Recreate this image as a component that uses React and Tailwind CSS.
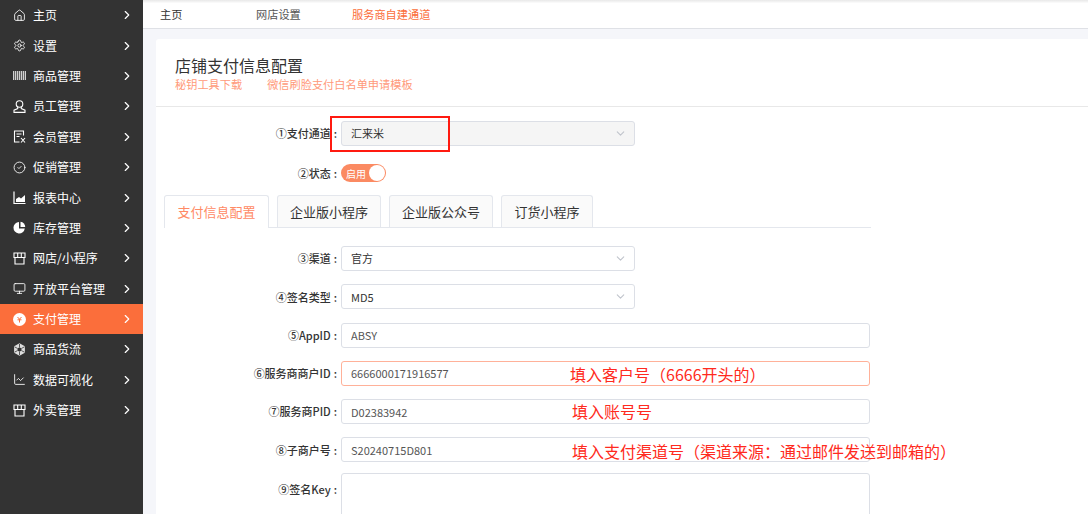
import React from "react";
import {
  House,
  Settings,
  CircleCheck,
  Monitor,
  ChartLine,
  ChevronRight,
  ChevronDown,
} from "lucide-react";

// 菜单图标,lucide 里没有一样的就自己画
function Svg({ children }) {
  return (
    <svg width="13" height="13" viewBox="0 0 13 13" fill="none" stroke="currentColor" strokeWidth="1.1">
      {children}
    </svg>
  );
}

const BarrasIcon = () => (
  <Svg>
    <path d="M0 2h13v9H0z" fill="#cfcfcf" stroke="none" />
    <path d="M1.500 2v9M3.500 2v9M5.500 2v9M7.500 2v9M9.500 2v9M11.500 2v9" stroke="#333" strokeWidth="0.7" />
  </Svg>
);

const UserIcon = () => (
  <Svg>
    <circle cx="6.5" cy="4" r="3.3" />
    <path d="M4.700 7v1.600L1 10.200v2.200h11v-2.200L8.300 8.600V7" />
  </Svg>
);

const MembroIcon = () => (
  <Svg>
    <path d="M10.500 5.500V1h-9v11h5M3.500 4h5M3.500 6.500h3" />
    <path d="M8 8l4 4.500M12 8l-4 4.500" />
  </Svg>
);

const AreaIcon = () => (
  <Svg>
    <path d="M1 0.500v12h11.500" strokeWidth="1.2" />
    <path d="M3 11V8l3-2 2 1.500 4-3.500v7z" fill="currentColor" stroke="none" />
  </Svg>
);

const PizzaIcon = () => (
  <Svg>
    <path d="M6 1a5.700 5.700 0 1 0 5.800 6.500H6z" fill="currentColor" stroke="none" />
    <path d="M7.500 0.800a5 5 0 0 1 4.700 5.200H7.500z" fill="currentColor" stroke="none" />
  </Svg>
);

const LojaIcon = () => (
  <Svg>
    <path d="M1 1h11v4.500H1zM4.700 1v4.500M8.300 1v4.500M2 5.500V12h9V5.500" />
  </Svg>
);

const PayIcon = () => (
  <svg width="13" height="13" viewBox="0 0 13 13">
    <circle cx="6.5" cy="6.5" r="6.5" fill="#fff" />
    <path d="M4.500 4l2 2.200 2-2.200M4.500 6.800h4M6.500 6.200v3.300" stroke="#fb6e3b" strokeWidth="1" fill="none" />
  </svg>
);

const FluxoIcon = () => (
  <svg width="13" height="13" viewBox="0 0 13 13">
    <path d="M6.500 0.300l5.400 3v6.400l-5.400 3-5.400-3V3.300z" fill="#ddd" />
    <circle cx="6.5" cy="6.5" r="2" fill="#333" />
    <path d="M6.500 1v3.500M6.500 8.500v3.500M1.500 3.800l3.200 1.700M8.300 7.500l3.200 1.700M11.500 3.800L8.300 5.500M4.700 7.500l-3.200 1.700" stroke="#333" strokeWidth="0.8" />
  </svg>
);

const menus = [
  { nome: "主页", Icon: House },
  { nome: "设置", Icon: Settings },
  { nome: "商品管理", Icon: BarrasIcon },
  { nome: "员工管理", Icon: UserIcon },
  { nome: "会员管理", Icon: MembroIcon },
  { nome: "促销管理", Icon: CircleCheck },
  { nome: "报表中心", Icon: AreaIcon },
  { nome: "库存管理", Icon: PizzaIcon },
  { nome: "网店/小程序", Icon: LojaIcon },
  { nome: "开放平台管理", Icon: Monitor },
  { nome: "支付管理", Icon: PayIcon, ativo: true },
  { nome: "商品货流", Icon: FluxoIcon },
  { nome: "数据可视化", Icon: ChartLine },
  { nome: "外卖管理", Icon: LojaIcon },
];

const abas = ["企业版小程序", "企业版公众号", "订货小程序"];

function Rotulo({ texto, className = "" }) {
  return (
    <div className={`w-[185px] pr-[4px] text-right text-[11px] font-medium text-[#333] whitespace-nowrap ${className}`}>
      {texto}
      <span className="ml-[3px]">:</span>
    </div>
  );
}

function Linha({ label, children, className = "mb-[13.3px]" }) {
  return (
    <div className={`flex items-center ${className}`}>
      <Rotulo texto={label} />
      {children}
    </div>
  );
}

function Selecao({ valor, disabled }) {
  return (
    <div className={`flex h-[25px] w-[294px] items-center justify-between rounded-[3px] border border-[#dcdfe6] pl-[9px] pr-[7px] text-[11px] text-[#333] ${disabled ? "bg-[#f5f5f5]" : "bg-white"}`}>
      <span>{valor}</span>
      <ChevronDown size={13} className="text-[#c0c4cc]" />
    </div>
  );
}

function Campo({ valor, borda = "border-[#dcdfe6]" }) {
  return (
    <input
      readOnly
      value={valor}
      className={`h-[25px] w-[529px] rounded-[3px] border bg-white px-[9px] text-[11px] text-[#555] outline-none ${borda}`}
    />
  );
}

export default function App() {
  return (
    <div
      className="relative flex h-[514px] w-[1088px] overflow-hidden bg-[#f5f6fa]"
      style={{ fontFamily: '"Noto Sans CJK SC", "Noto Sans", sans-serif' }}
    >
      {/* 左侧菜单 */}
      <aside className="w-[143px] shrink-0 bg-[#333333] text-[12px] text-white">
        {menus.map(({ nome, Icon, ativo }) => (
          <div
            key={nome}
            className={`flex h-[30.4px] items-center pl-[13px] pr-[9px] ${ativo ? "bg-[#fb6e3b]" : ""}`}
          >
            <span className="flex w-[20px] shrink-0 items-center">
              <Icon size={13} strokeWidth={1.6} />
            </span>
            <span className="flex-1 whitespace-nowrap">{nome}</span>
            <ChevronRight size={14} strokeWidth={2} />
          </div>
        ))}
      </aside>

      <main className="flex min-w-0 flex-1 flex-col">
        {/* 顶部导航 */}
        <nav className="flex h-[29px] shrink-0 items-center border-b border-[#dfe1e6] bg-gradient-to-b from-[#e8e8e8] via-white via-[12%] to-white pl-[17px] text-[11.2px]">
          <span className="w-[96px] text-[#333]">主页</span>
          <span className="w-[96px] text-[#555]">网店设置</span>
          <span className="text-[#fb6e3b]">服务商自建通道</span>
        </nav>

        {/* 内容卡片 */}
        <section className="ml-[13px] mt-[10px] flex-1 rounded-tl-[3px] bg-white">
          <header className="h-[68px] border-b border-[#e8e8e8] pl-[19px] pt-[15px]">
            <h1 className="text-[16px] leading-[22px] text-[#333]">店铺支付信息配置</h1>
            <div className="flex gap-[25px] text-[11.2px] leading-[16px] text-[#ff9a7a]">
              <span>秘钥工具下载</span>
              <span>微信刷脸支付白名单申请模板</span>
            </div>
          </header>

          <div className="pt-[14px]">
            <Linha label="①支付通道" className="mb-[18px]">
              <Selecao valor="汇来米" disabled />
            </Linha>
            <Linha label="②状态" className="mb-[13px]">
              <div className="flex h-[18px] w-[45px] items-center justify-between rounded-full bg-[#fb8a62] pl-[5px] pr-[1px] text-[10px] text-white">
                <span>启用</span>
                <span className="h-[16px] w-[16px] rounded-full bg-white" />
              </div>
            </Linha>

            {/* 页签 */}
            <div className="ml-[8px] flex h-[33px] w-[707px] items-end gap-[8px] border-b border-[#e4e7ed]">
              <div className="flex h-[33px] w-[105px] translate-y-[1px] items-center justify-center rounded-t-[3px] border border-b-0 border-[#e4e7ed] bg-white text-[13px] text-[#ff8a65]">
                支付信息配置
              </div>
              {abas.map((aba, i) => (
                <div
                  key={aba}
                  className={`flex h-[32px] items-center justify-center rounded-t-[3px] border border-b-0 border-[#e4e7ed] bg-[#fafafa] text-[13px] text-[#333] ${i === 2 ? "w-[92px]" : "w-[104px]"}`}
                >
                  {aba}
                </div>
              ))}
            </div>

            <div className="pt-[18px]">
              <Linha label="③渠道"><Selecao valor="官方" /></Linha>
              <Linha label="④签名类型"><Selecao valor="MD5" /></Linha>
              <Linha label="⑤AppID"><Campo valor="ABSY" /></Linha>
              <Linha label="⑥服务商商户ID"><Campo valor="6666000171916577" borda="border-[#ffb199]" /></Linha>
              <Linha label="⑦服务商PID"><Campo valor="D02383942" /></Linha>
              <Linha label="⑧子商户号" className="mb-[10.5px]"><Campo valor="S20240715D801" /></Linha>
              <div className="flex items-start">
                <Rotulo texto="⑨签名Key" className="pt-[8px]" />
                <textarea readOnly className="h-[80px] w-[529px] resize-none rounded-[3px] border border-[#dcdfe6] bg-white outline-none" />
              </div>
            </div>
          </div>
        </section>
      </main>

      {/* 截图上的红色标注 */}
      <div className="absolute left-[330px] top-[116px] h-[36px] w-[120px] border-2 border-[#ff1a10]" />
      <div className="absolute left-[570px] top-[362px] text-[16px] leading-[24px] whitespace-nowrap text-[#ff2a20]">填入客户号{"\uFF08"}6666开头的{"\uFF09"}</div>
      <div className="absolute left-[572px] top-[399px] text-[16px] leading-[24px] whitespace-nowrap text-[#ff2a20]">填入账号号</div>
      <div className="absolute left-[572px] top-[439px] text-[16px] leading-[24px] whitespace-nowrap text-[#ff2a20]">填入支付渠道号{"\uFF08"}渠道来源{"\uFF1A"}通过邮件发送到邮箱的{"\uFF09"}</div>
    </div>
  );
}
